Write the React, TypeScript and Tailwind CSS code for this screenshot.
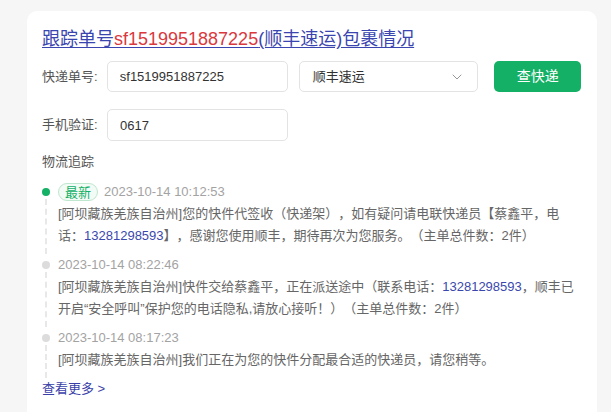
import { ChevronDown } from "lucide-react";

type Track = {
  time: string;
  latest?: boolean;
  text: React.ReactNode;
};

const tracks: Track[] = [
  {
    time: "2023-10-14 10:12:53",
    latest: true,
    text: (
      <>
        [阿坝藏族羌族自治州]您的快件代签收（快递架），如有疑问请电联快递员【蔡鑫平，电话：
        <span className="text-[#3a48ad]">13281298593</span>
        】，感谢您使用顺丰，期待再次为您服务。（主单总件数：2件）
      </>
    ),
  },
  {
    time: "2023-10-14 08:22:46",
    text: (
      <>
        [阿坝藏族羌族自治州]快件交给蔡鑫平，正在派送途中（联系电话：
        <span className="text-[#3a48ad]">13281298593</span>
        ，顺丰已开启“安全呼叫”保护您的电话隐私,请放心接听！）（主单总件数：2件）
      </>
    ),
  },
  {
    time: "2023-10-14 08:17:23",
    text: <>[阿坝藏族羌族自治州]我们正在为您的快件分配最合适的快递员，请您稍等。</>,
  },
];

function TrackItem({ track }: { track: Track }) {
  return (
    <li className="flex">
      <div className="mr-[9px] flex w-[7px] flex-col items-center">
        <div
          className={
            track.latest
              ? "mt-[7px] h-[8px] w-[8px] shrink-0 rounded-full bg-[#14b065]"
              : "mt-[7px] h-[8px] w-[8px] shrink-0 rounded-full bg-[#dcdcdc]"
          }
        />
        <div className="mt-[3px] w-0 flex-1 border-l-2 border-dashed border-[#e8e8e8]" />
      </div>
      <div className="flex-1 pb-[7px]">
        <div className="flex h-[22px] items-center gap-[6px]">
          {track.latest && (
            <span className="flex h-[18px] items-center rounded-full border border-[#bfe6cf] bg-[#f3fbf6] px-[6px] text-[13px] leading-none text-[#14b065]">
              最新
            </span>
          )}
          <span className="text-[13px] text-[#a3a3a3]">{track.time}</span>
        </div>
        <p className="text-[13px] leading-[22px] text-[#666] [text-spacing-trim:space-all]">
          {track.text}
        </p>
      </div>
    </li>
  );
}

export default function App() {
  return (
    <div className="min-h-[412px] bg-[#f6f6f6] pt-[11px] font-['Liberation_Sans','Noto_Sans_CJK_SC',sans-serif]">
      <div className="ml-[27px] w-[570px] rounded-[10px] bg-white pb-6 pl-[15px] pr-[16px] pt-[16px]">
        <h1 className="h-[24px] text-[18px] leading-[24px] text-[#3a45b0] underline underline-offset-[2px]">
          跟踪单号<span className="text-[#d9393e]">sf1519951887225</span>(顺丰速运)包裹情况
        </h1>

        <div className="mt-[10px] flex items-center">
          <label className="w-[65px] text-[13px] text-[#555]">快递单号:</label>
          <input
            defaultValue="sf1519951887225"
            className="h-[31px] w-[181px] rounded-[5px] border border-[#e3e3e3] px-[12px] text-[13px] text-[#333] outline-none"
          />
          <button className="ml-[11px] flex h-[31px] w-[180px] items-center justify-between rounded-[5px] border border-[#e3e3e3] pl-[13px] pr-[12px] text-[13px] text-[#333]">
            顺丰速运
            <ChevronDown size={16} strokeWidth={1.3} className="text-[#888]" />
          </button>
          <button className="ml-[16px] h-[31px] w-[87px] rounded-[5px] bg-[#14b065] text-[14px] text-white">
            查快递
          </button>
        </div>

        <div className="mt-[17px] flex items-center">
          <label className="w-[65px] text-[13px] text-[#555]">手机验证:</label>
          <input
            defaultValue="0617"
            className="h-[32px] w-[181px] rounded-[5px] border border-[#e3e3e3] px-[12px] text-[13px] text-[#333] outline-none"
          />
        </div>

        <h2 className="mt-[11px] text-[13px] leading-[20px] text-[#555]">物流追踪</h2>

        <ul className="mt-[9px] flex flex-col">
          {tracks.map((track) => (
            <TrackItem key={track.time} track={track} />
          ))}
        </ul>

        <a className="mt-[1px] block text-[13px] leading-[20px] text-[#3a3fa8]">查看更多 &gt;</a>
      </div>
    </div>
  );
}
